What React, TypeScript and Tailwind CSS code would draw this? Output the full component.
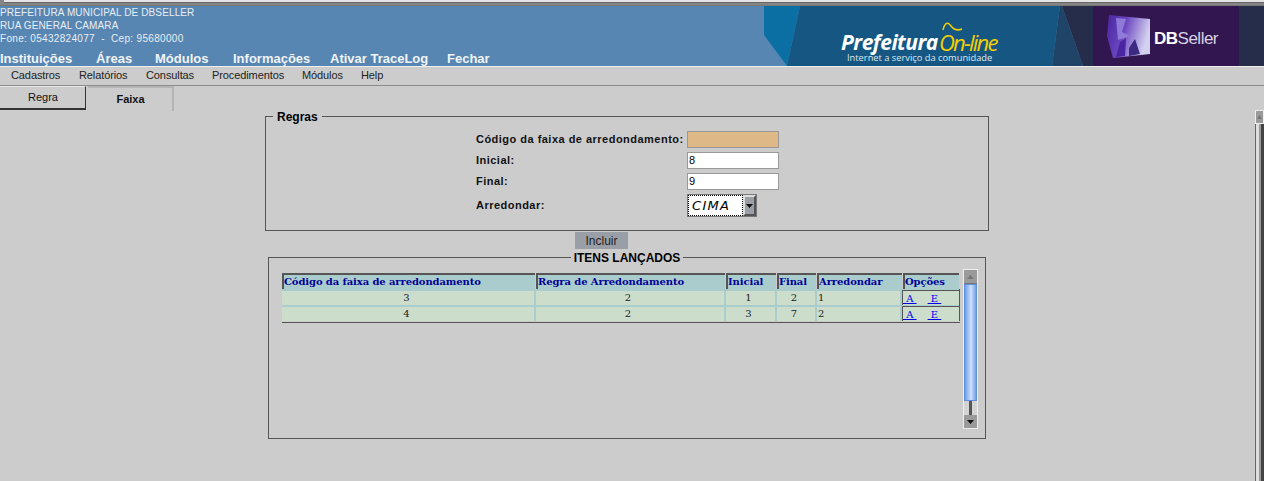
import type { ReactNode } from 'react';

const ui = 'font-["Liberation_Sans",Arial,sans-serif]';
const serif = 'font-["DejaVu_Serif",serif]';

const topMenu = [
  { label: 'Instituições', w: 'w-[96px]' },
  { label: 'Áreas', w: 'w-[59px]' },
  { label: 'Módulos', w: 'w-[78px]' },
  { label: 'Informações', w: 'w-[97px]' },
  { label: 'Ativar TraceLog', w: 'w-[117px]' },
  { label: 'Fechar', w: 'w-[60px]' },
];

const subMenu = [
  { label: 'Cadastros', w: 'w-[68px]' },
  { label: 'Relatórios', w: 'w-[67px]' },
  { label: 'Consultas', w: 'w-[66px]' },
  { label: 'Procedimentos', w: 'w-[90px]' },
  { label: 'Módulos', w: 'w-[59px]' },
  { label: 'Help', w: 'w-[30px]' },
];

const rows = [
  { codigo: 3, regra: 2, inicial: 1, final: 2, arredondar: 1 },
  { codigo: 4, regra: 2, inicial: 3, final: 7, arredondar: 2 },
];

function HeaderCell({ className, children }: { className: string; children: ReactNode }) {
  return (
    <div className={`${className} h-[16px] shrink-0 bg-[#aacccc] border-l-2 border-t-2 border-[#555] text-[10px] leading-[14px] font-bold text-[#000099] tracking-[-0.1px] whitespace-nowrap`}>
      {children}
    </div>
  );
}

function DataCell({ className, children }: { className: string; children: ReactNode }) {
  return (
    <div className={`${className} h-[14px] shrink-0 bg-[#ccddcc] text-[10px] leading-[14px] text-[#222]`}>
      {children}
    </div>
  );
}

function Logo() {
  return (
    <div className="relative w-[500px] h-[60px] shrink-0 overflow-hidden">
      <svg width="500" height="60" viewBox="0 0 500 60" className="absolute inset-0">
        <defs>
          <linearGradient id="dbMark" x1="0" y1="0" x2="1" y2="0.3">
            <stop offset="0" stopColor="#4a25a0" />
            <stop offset="0.45" stopColor="#6a45c0" />
            <stop offset="1" stopColor="#d4d0f0" />
          </linearGradient>
        </defs>
        <polygon points="0,0 36,0 23,60 0,29" fill="#0b6fa3" />
        <polygon points="36,0 296,0 288,60 23,60" fill="#155782" />
        <polygon points="296,0 298,0 319,60 288,60" fill="#1f4467" />
        <polygon points="298,0 329,0 329,60 319,60" fill="#252d4a" />
        <rect x="329" y="0" width="146" height="60" fill="#321650" />
        <rect x="475" y="0" width="25" height="60" fill="#252d4a" />
        <polygon points="345,9 386,13 386,48 349,52 343,30" fill="url(#dbMark)" />
        <polygon points="352,12 362,13 358,26 366,30 354,34" fill="#8f7ad8" />
        <polygon points="365,42 371,33 376,48 365,50" fill="#3c2a80" />
        <polygon points="356,36 362,32 361,50 352,51" fill="#4a25a0" />
        <path d="M179 24 c2 -8 5 -8 8 -4 c3 4 6 5 11 3" stroke="#f5d000" strokeWidth="1.5" fill="none" />
      </svg>
      <span className='absolute left-[77px] top-[26px] font-["Open_Sans",sans-serif] font-bold italic text-[21px] leading-[20px] text-white tracking-[-0.5px]'>Prefeitura</span>
      <span className='absolute left-[175px] top-[26px] font-["Open_Sans",sans-serif] italic text-[22px] leading-[20px] text-[#f5d000] tracking-[-1.8px]'>On-line</span>
      <span className='absolute left-[83px] top-[46px] font-["Open_Sans",sans-serif] text-[9.3px] leading-[12px] text-[#dfe8ee] whitespace-nowrap'>Internet a serviço da comunidade</span>
      <span className='absolute left-[390px] top-[23px] font-["Liberation_Sans",sans-serif] text-[17px] leading-[20px] text-white whitespace-nowrap tracking-[-0.5px]'>
        <b>DB</b><span className="text-[#d8d4e4]">Seller</span>
      </span>
    </div>
  );
}

export default function App() {
  return (
    <div className={`${ui} relative w-[1264px] h-[481px] overflow-hidden bg-[#cccccc] flex flex-col`}>
      {/* browser chrome remainder */}
      <div className="h-[6px] shrink-0 bg-[#858585] border-b border-[#777]">
        <div className="h-[3px] ml-[4px] bg-[#e4e4e4] border-b border-[#666]" />
      </div>

      <div className="h-[60px] shrink-0 bg-[#5886b2] flex justify-between">
        <div className="text-white">
          <div className="text-[10px] leading-[13px] text-[#e8eef5] tracking-[0.12px]">
            <p>PREFEITURA MUNICIPAL DE DBSELLER</p>
            <p>RUA GENERAL CAMARA</p>
            <p className="whitespace-pre tracking-[0.32px]">Fone: 05432824077  -  Cep: 95680000</p>
          </div>
          <div className="flex mt-[6px] text-[13px] leading-[15px] font-bold text-[#f0f4f8]">
            {topMenu.map((item) => (
              <span key={item.label} className={`${item.w} whitespace-nowrap`}>{item.label}</span>
            ))}
          </div>
        </div>
        <Logo />
      </div>

      <div className="h-[19px] shrink-0 border-t border-[#eee] border-b-0 bg-[#cccccc] flex pl-[11px] text-[11px] leading-[16px] text-[#222] tracking-[-0.1px]">
        {subMenu.map((item) => (
          <span key={item.label} className={`${item.w} whitespace-nowrap`}>{item.label}</span>
        ))}
      </div>
      <div className="h-px shrink-0 bg-[#8c8c8c]" />

      <div className="flex h-[25px] shrink-0">
        <div className="w-[86px] h-[24px] border-r border-b-2 border-[#333] border-t border-t-[#e6e6e6] bg-[#cccccc] pl-[1px] text-[11px] leading-[21px] text-center text-[#111]">
          Regra
        </div>
        <div className="ml-[2px] w-[86px] h-[25px] border-t-2 border-r-2 border-[#b4b4b4] bg-[#cccccc] pl-[1px] text-[11px] leading-[22px] font-bold text-center text-[#111]">
          Faixa
        </div>
      </div>

      <main className="relative flex-1 flex flex-col items-start">
        <fieldset className="ml-[265px] mt-[-1px] w-[724px] h-[121px] border border-[#555] px-[7px]">
          <legend className="px-[4px] text-[12px] leading-[13px] font-bold text-black"><span className="block translate-y-px">Regras</span></legend>
          <div className="ml-[203px] mt-[6px] text-[11px] font-bold text-[#111] tracking-[0.48px]">
            <div className="flex h-[21px] items-center">
              <span className="w-[211px] whitespace-nowrap">Código da faixa de arredondamento:</span>
              <div className="w-[92px] h-[17px] bg-[#deb887] border border-[#999]" />
            </div>
            <div className="flex h-[21px] items-center">
              <span className="w-[211px]">Inicial:</span>
              <div className="w-[92px] h-[17px] bg-white border border-[#999] pl-[1px] text-[11px] leading-[15px] font-normal text-black">8</div>
            </div>
            <div className="flex h-[21px] items-center">
              <span className="w-[211px]">Final:</span>
              <div className="w-[92px] h-[17px] bg-white border border-[#999] pl-[1px] text-[11px] leading-[15px] font-normal text-black">9</div>
            </div>
            <div className="flex h-[27px] items-center">
              <span className="w-[211px]">Arredondar:</span>
              <div className="flex w-[70px] h-[23px] bg-white border border-[#777]">
                <div className='flex-1 border border-dotted border-black font-["DejaVu_Sans",cursive] italic font-normal text-[13px] leading-[19px] pl-[3px] text-black tracking-[1.3px]'>CIMA</div>
                <div className="w-[13px] bg-[#9a9ea6] border-2 border-t-[#ddd] border-l-[#ddd] border-r-[#555] border-b-[#555] flex items-center justify-center">
                  <svg width="7" height="4" viewBox="0 0 7 4"><polygon points="0,0 7,0 3.5,4" fill="#111" /></svg>
                </div>
              </div>
            </div>
          </div>
        </fieldset>

        <div className="ml-[575px] mt-[1px] w-[53px] h-[17px] bg-[#9a9ea6] text-[12px] leading-[18px] text-center text-[#222]">
          Incluir
        </div>

        <fieldset className="ml-[268px] mt-[2px] w-[718px] h-[188px] border border-[#555] text-center">
          <legend className="mx-auto px-[3px] text-[12px] leading-[13px] font-bold text-black"><span className="block translate-y-px">ITENS LANÇADOS</span></legend>
          <div className="flex text-left pl-[13px] pt-[9px]">
            <div className={`${serif} w-[678px] shrink-0 self-start`}>
              <div className="flex gap-[1px] pr-[1px]">
                <HeaderCell className="w-[253px]">Código da faixa de arredondamento</HeaderCell>
                <HeaderCell className="w-[189px]">Regra de Arredondamento</HeaderCell>
                <HeaderCell className="w-[50px]">Inicial</HeaderCell>
                <HeaderCell className="w-[39px]">Final</HeaderCell>
                <HeaderCell className="w-[85px]">Arredondar</HeaderCell>
                <HeaderCell className="w-[56px]">Opções</HeaderCell>
              </div>
              <div className="bg-[#aacccc] border-r border-[#555]">
                {rows.map((row) => (
                  <div key={row.codigo} className="flex gap-[2px] pt-[2px]">
                    <DataCell className="w-[252px] pr-[3px] text-center">{row.codigo}</DataCell>
                    <DataCell className="w-[188px] pr-[4px] text-center">{row.regra}</DataCell>
                    <DataCell className="w-[49px] pr-[4px] text-center">{row.inicial}</DataCell>
                    <DataCell className="w-[38px] pr-[4px] text-center">{row.final}</DataCell>
                    <DataCell className="w-[83px] pl-[1px]">{row.arredondar}</DataCell>
                    <div className="flex-1 h-[15px] mt-[-1px] bg-[#ccddcc] border-l border-t border-[#555] text-[10px] leading-[15px] text-[#0000ee] whitespace-pre">
                      <span className="underline"> A </span><span className="underline ml-[11px]"> E </span>
                    </div>
                  </div>
                ))}
              </div>
              <div className="h-px bg-[#555] mt-px" />
            </div>
            <div className="ml-[3px] w-[15px] h-[160px] shrink-0 mt-[-4px] border border-[#eee] flex flex-col">
              <div className="h-[14px] bg-[#9a9a9a] border-b border-[#777] flex items-center justify-center">
                <svg width="7" height="4" viewBox="0 0 7 4"><polygon points="3.5,0 7,4 0,4" fill="#777" /></svg>
              </div>
              <div className="h-[117px] bg-[linear-gradient(90deg,#6f9ee8,#cfe0fb_55%,#6f9ee8)] border border-[#5f8fe0]" />
              <div className="flex-1 bg-[#d4d4d4] flex justify-center">
                <div className="w-[3px] h-full bg-[#555]" />
              </div>
              <div className="h-[13px] bg-[#9a9a9a] flex items-center justify-center">
                <svg width="7" height="4" viewBox="0 0 7 4"><polygon points="0,0 7,0 3.5,4" fill="#111" /></svg>
              </div>
            </div>
          </div>
        </fieldset>

        {/* page scrollbar */}
        <div className="absolute right-0 top-[-1px] bottom-0 w-[9px] bg-[linear-gradient(90deg,#666_0,#666_1px,#ddd_1px,#ddd_4px,#999_4px,#999_6px,#444_6px)]">
          <div className="h-[14px] bg-[#9a9a9a] border border-[#eee] flex items-center justify-center">
            <svg width="5" height="4" viewBox="0 0 5 4"><polygon points="2.5,0 5,4 0,4" fill="#777" /></svg>
          </div>
        </div>
      </main>
    </div>
  );
}
